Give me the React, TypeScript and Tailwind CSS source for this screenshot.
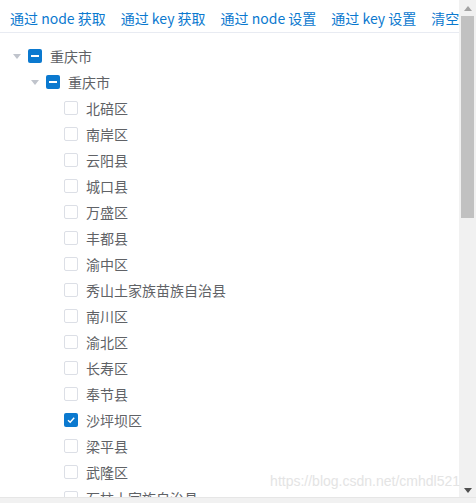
import React from "react";

const leaves = [
  "北碚区",
  "南岸区",
  "云阳县",
  "城口县",
  "万盛区",
  "丰都县",
  "渝中区",
  "秀山土家族苗族自治县",
  "南川区",
  "渝北区",
  "长寿区",
  "奉节县",
  "沙坪坝区",
  "梁平县",
  "武隆区",
  "石柱土家族自治县",
];

const actions = ["通过 node 获取", "通过 key 获取", "通过 node 设置", "通过 key 设置", "清空"];

function Caret({ show }: { show: boolean }) {
  return (
    <span className="w-[12px] h-[12px] flex items-center justify-center shrink-0">
      {show && (
        <svg width="8" height="5" viewBox="0 0 8 5">
          <path d="M0 0 L8 0 L4 5 Z" fill="#c0c4cc" />
        </svg>
      )}
    </span>
  );
}

function Box({ state }: { state: "none" | "half" | "all" }) {
  if (state === "none") {
    return <span className="w-[14px] h-[14px] shrink-0 rounded-[2px] border border-[#dcdfe6] bg-white" />;
  }
  return (
    <span className="w-[14px] h-[14px] shrink-0 rounded-[2px] bg-[#0b79cf] flex items-center justify-center">
      {state === "half" ? (
        <span className="w-[8px] h-[2px] bg-white" />
      ) : (
        <svg width="10" height="10" viewBox="0 0 10 10">
          <path d="M2 5.2 L4.2 7.3 L8.2 2.8" fill="none" stroke="white" strokeWidth="1.4" />
        </svg>
      )}
    </span>
  );
}

function Row({ level, label, state, caret }: { level: number; label: string; state: "none" | "half" | "all"; caret: boolean }) {
  const pad = level === 1 ? "pl-[11px]" : level === 2 ? "pl-[29px]" : "pl-[47px]";
  return (
    <div className={`h-[26px] flex items-center ${pad}`}>
      <Caret show={caret} />
      <span className="ml-[5px] flex items-center">
        <Box state={state} />
      </span>
      <span className="ml-[8px] text-[14px] text-[#606266] whitespace-nowrap">{label}</span>
    </div>
  );
}

export default function App() {
  return (
    <div
      className="relative w-[476px] h-[503px] flex flex-col overflow-hidden bg-white"
      style={{ fontFamily: '"Noto Sans CJK SC", "Noto Sans", sans-serif' }}
    >
      <div className="flex flex-1 min-h-0">
        <div className="flex-1 min-w-0 overflow-hidden">
          <div className="h-[33px] border-b border-[#e8ebf2] flex items-center pt-[5px] pl-[10px] gap-[15px] whitespace-nowrap overflow-hidden">
            {actions.map((a) => (
              <span key={a} className="text-[14px] text-[#0b79cf] shrink-0">
                {a}
              </span>
            ))}
          </div>
          <div className="pt-[10px]">
            <Row level={1} label="重庆市" state="half" caret />
            <Row level={2} label="重庆市" state="half" caret />
            {leaves.map((l) => (
              <Row key={l} level={3} label={l} state={l === "沙坪坝区" ? "all" : "none"} caret={false} />
            ))}
          </div>
        </div>
        <div className="w-[17px] bg-[#f1f1f1] flex flex-col items-center shrink-0">
          <div className="h-[16px] flex items-center justify-center">
            <svg width="8" height="5" viewBox="0 0 8 5">
              <path d="M0 5 L8 5 L4 0 Z" fill="#a3a3a3" />
            </svg>
          </div>
          <div className="w-[13px] h-[202px] bg-[#c1c1c1]" />
          <div className="flex-1" />
          <div className="h-[14px] flex items-center justify-center">
            <svg width="8" height="5" viewBox="0 0 8 5">
              <path d="M0 0 L8 0 L4 5 Z" fill="#505050" />
            </svg>
          </div>
        </div>
      </div>
      <div className="h-[6px] bg-[#f1f1f1] border-t border-[#e6e6e6] shrink-0" />
      <div
        className="absolute right-[16px] bottom-[11px] text-[14px] text-[#e4e4e4] pointer-events-none"
        style={{ fontFamily: '"Liberation Sans", Arial, sans-serif' }}
      >
        https://blog.csdn.net/cmhdl521
      </div>
    </div>
  );
}
